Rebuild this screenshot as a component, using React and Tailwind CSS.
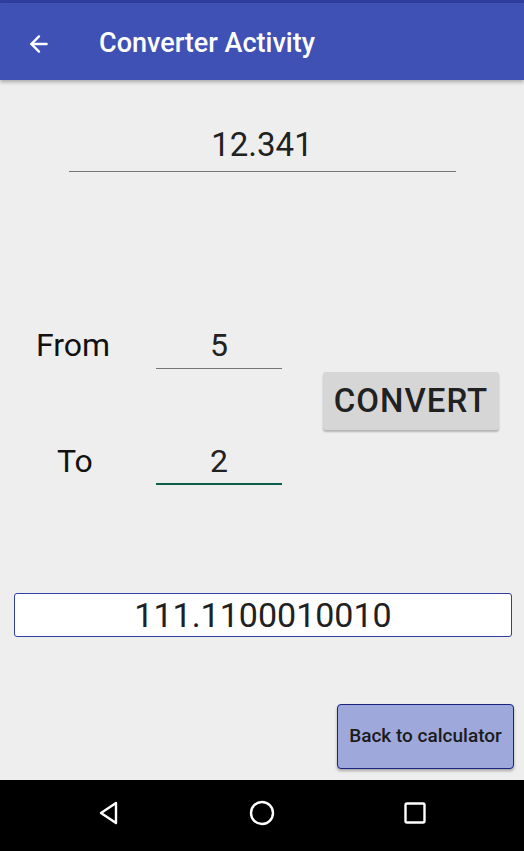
import { ArrowLeft } from 'lucide-react';

const App = () => {
  return (
    <div className="w-[524px] h-[851px] flex flex-col bg-[#eeeeee] overflow-hidden" style={{ fontFamily: 'Roboto, "Noto Sans", sans-serif' }}>
      <div className="h-[3px] bg-[#303f9f]" />
      <div className="h-[77px] bg-[#3f51b5] flex items-center pt-[4px] shadow-[0_2px_4px_rgba(0,0,0,0.3)] z-10">
        <ArrowLeft className="ml-[26px] w-[26px] h-[26px] text-white" strokeWidth={2.2} />
        <h1 className="ml-[47px] text-white text-[27px] font-medium">Converter Activity</h1>
      </div>

      <div className="flex-1 flex flex-col">
        <div className="mt-[45px] mx-auto w-[387px] border-b border-[#757575] text-center text-[33px] text-[#212121] leading-[40px] pb-[6px]">
          12.341
        </div>

        <div className="mt-[139px] flex items-center">
          <div className="flex flex-col">
            <div className="flex items-end h-[58px]">
              <span className="w-[156px] pl-[36px] text-[32px] text-[#111] leading-[40px] pb-[4px]">From</span>
              <div className="w-[126px] border-b border-[#757575] text-center text-[32px] text-[#212121] leading-[40px] pb-[3px]">5</div>
            </div>
            <div className="flex items-end h-[58px] mt-[58px]">
              <span className="w-[156px] pl-[57px] text-[32px] text-[#111] leading-[40px] pb-[4px]">To</span>
              <div className="w-[126px] border-b-2 border-[#0b5e4b] text-center text-[32px] text-[#212121] leading-[40px] pb-[2px]">2</div>
            </div>
          </div>
          <button className="ml-[41px] mt-[6px] w-[176px] h-[58px] bg-[#d6d6d6] rounded-[3px] shadow-[0_2px_2px_rgba(0,0,0,0.25)] text-[33px] font-medium text-[#212121] tracking-[1px]">
            CONVERT
          </button>
        </div>

        <div className="mt-[108px] ml-[14px] mr-[12px] h-[44px] bg-white border border-[#303f9f] rounded-[3px] flex items-center justify-center text-[34px] text-[#212121]">
          111.1100010010
        </div>

        <div className="mt-[67px] flex justify-end pr-[10px]">
          <button className="w-[177px] h-[65px] bg-[#9fa8da] border border-[#1a237e] rounded-[4px] shadow-[0_2px_3px_rgba(0,0,0,0.3)] text-[19px] font-medium text-[#1b1b1b]">
            Back to calculator
          </button>
        </div>
      </div>

      <div className="h-[71px] bg-black flex items-center justify-center gap-[127px] pb-[5px]">
        <svg width="26" height="26" viewBox="0 0 26 26" fill="none" stroke="white" strokeWidth="2.4" strokeLinejoin="round">
          <path d="M20 3 L5 13 L20 23 Z" />
        </svg>
        <svg width="26" height="26" viewBox="0 0 26 26" fill="none" stroke="white" strokeWidth="2.4">
          <circle cx="13" cy="13" r="11" />
        </svg>
        <svg width="26" height="26" viewBox="0 0 26 26" fill="none" stroke="white" strokeWidth="2.4">
          <rect x="3.5" y="3.5" width="19" height="19" rx="1.5" />
        </svg>
      </div>
    </div>
  );
};

export default App;
